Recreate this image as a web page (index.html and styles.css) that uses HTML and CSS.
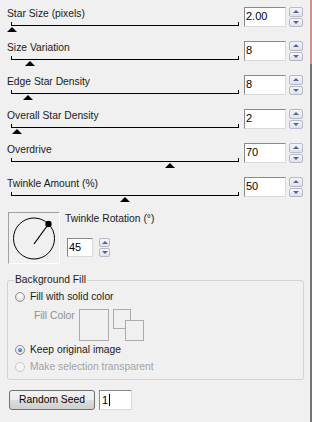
FILE: index.html
```html
<html>

<head>
  <title>Star Effect</title>
  <link rel="stylesheet" href="styles.css">
</head>

<body>

  <div class="row">
    <div class="slider-col">
      <label>Star Size (pixels)</label>
      <div class="track"><span class="thumb" style="--v: 0"></span></div>
    </div>
    <div class="value">2.00</div>
    <div class="spin"><span class="up"></span><span class="down"></span></div>
  </div>

  <div class="row">
    <div class="slider-col">
      <label>Size Variation</label>
      <div class="track"><span class="thumb" style="--v: 8"></span></div>
    </div>
    <div class="value">8</div>
    <div class="spin"><span class="up"></span><span class="down"></span></div>
  </div>

  <div class="row">
    <div class="slider-col">
      <label>Edge Star Density</label>
      <div class="track"><span class="thumb" style="--v: 7"></span></div>
    </div>
    <div class="value">8</div>
    <div class="spin"><span class="up"></span><span class="down"></span></div>
  </div>

  <div class="row">
    <div class="slider-col">
      <label>Overall Star Density</label>
      <div class="track"><span class="thumb" style="--v: 2"></span></div>
    </div>
    <div class="value">2</div>
    <div class="spin"><span class="up"></span><span class="down"></span></div>
  </div>

  <div class="row">
    <div class="slider-col">
      <label>Overdrive</label>
      <div class="track"><span class="thumb" style="--v: 70"></span></div>
    </div>
    <div class="value">70</div>
    <div class="spin"><span class="up"></span><span class="down"></span></div>
  </div>

  <div class="row">
    <div class="slider-col">
      <label>Twinkle Amount (%)</label>
      <div class="track"><span class="thumb" style="--v: 50"></span></div>
    </div>
    <div class="value">50</div>
    <div class="spin"><span class="up"></span><span class="down"></span></div>
  </div>

  <div class="dial-row">
    <div class="dial">
      <svg width="50" height="50" viewBox="0 0 50 50">
        <circle cx="25" cy="25.5" r="20.5" fill="none" stroke="#000" stroke-width="1"/>
        <line x1="25" y1="31" x2="39.5" y2="11" stroke="#000" stroke-width="1.2"/>
        <circle cx="39.5" cy="11" r="3.2" fill="#000"/>
      </svg>
    </div>
    <div class="dial-side">
      <label>Twinkle Rotation (°)</label>
      <div class="spinner">
        <div class="value small">45</div>
        <div class="spin small"><span class="up"></span><span class="down"></span></div>
      </div>
    </div>
  </div>

  <fieldset class="group">
    <legend>Background Fill</legend>
    <div class="opt"><span class="radio"></span>Fill with solid color</div>
    <div class="fill-row">
      <span class="fill-label">Fill Color</span>
      <span class="swatch"></span>
      <span class="pair"><span></span><span></span></span>
    </div>
    <div class="opt"><span class="radio on"></span>Keep original image</div>
    <div class="opt off"><span class="radio"></span>Make selection transparent</div>
  </fieldset>

  <div class="seed-row">
    <div class="button">Random Seed</div>
    <div class="value seed">1<span class="caret"></span></div>
  </div>

</body>

</html>
```

FILE: styles.css
```css
* {
  margin: 0;
  padding: 0;
  box-sizing: border-box;
}

html {
  background:
    linear-gradient(#d98c8a, #d98c8a) right top / 2px 64px no-repeat,
    linear-gradient(#767676, #767676) right top / 2px 100% no-repeat,
    #f0f0f0;
}

body {
  width: 312px;
  height: 422px;
  padding-top: 7px;
  overflow: hidden;
  font-family: "Liberation Sans", Arial, sans-serif;
  font-size: 10.3px;
  color: #1a1a1a;
}

label {
  display: block;
  line-height: 12px;
  margin-top: 1px;
}

/* slider rows */

.row {
  display: flex;
  height: 34px;
  padding-left: 7px;
}

.slider-col {
  width: 237px;
}

.track {
  position: relative;
  width: 228px;
  height: 4px;
  margin: 2px 0 0 4px;
  border: 1px solid #000;
  border-top: 0;
}

.thumb {
  position: absolute;
  top: 5px;
  left: calc(var(--v) * 1% - 5px);
  width: 0;
  height: 0;
  border-left: 5px solid transparent;
  border-right: 5px solid transparent;
  border-bottom: 5px solid #000;
}

.value {
  width: 42px;
  height: 20px;
  padding: 1px 0 0 1px;
  background: #fff;
  border: 1px solid;
  border-color: #8a8a8a #dadada #dadada #8a8a8a;
  font-size: 11px;
  line-height: 14px;
  color: #000;
}

.spin {
  display: flex;
  flex-direction: column;
  gap: 1px;
  width: 14px;
  height: 20px;
  margin-left: 3px;
}

.spin span {
  flex: 1;
  display: flex;
  align-items: center;
  justify-content: center;
  background: linear-gradient(#f6f7f9, #dfe2ea);
  border: 1px solid #b6bac8;
  border-radius: 2px;
}

.spin .up::after,
.spin .down::after {
  content: "";
  width: 0;
  height: 0;
  border-left: 3px solid transparent;
  border-right: 3px solid transparent;
}

.spin .up::after {
  border-bottom: 3px solid #56639a;
}

.spin .down::after {
  border-top: 3px solid #56639a;
}

/* rotation dial */

.dial-row {
  display: flex;
  padding-left: 8px;
  margin-top: 1px;
}

.dial {
  width: 52px;
  height: 52px;
  border: 1px solid;
  border-color: #a0a0a0 #fff #fff #a0a0a0;
}

.dial svg {
  display: block;
}

.dial-side {
  margin-left: 5px;
}

.spinner {
  display: flex;
  margin: 13px 0 0 2px;
}

.value.small {
  width: 26px;
  height: 19px;
}

.spin.small {
  width: 11px;
  height: 19px;
  margin-left: 6px;
}

/* background fill group */

.group {
  margin: 10px 8px 0 7px;
  padding: 0 8px 5px 8px;
  border: 1px solid #d3d3d3;
  border-radius: 3px;
}

.group legend {
  margin-left: -2px;
  padding: 0 1px;
  line-height: 12px;
}

.opt {
  display: flex;
  align-items: center;
  height: 14px;
  line-height: 14px;
}

.opt:first-of-type {
  margin-top: 4px;
}

.opt.off {
  margin-top: 3px;
  color: #a3a3a3;
}

.radio {
  display: flex;
  align-items: center;
  justify-content: center;
  width: 10px;
  height: 10px;
  margin: 0 5px 0 -1px;
  border: 1px solid #8e8f8f;
  border-radius: 50%;
  background: radial-gradient(circle at 50% 35%, #fff, #d4d4d4);
}

.radio.on::after {
  content: "";
  width: 4px;
  height: 4px;
  border-radius: 50%;
  background: radial-gradient(circle at 40% 35%, #6fb2ee, #1c4f9a);
}

.opt.off .radio {
  border-color: #c9c9c9;
  background: #f4f4f4;
}

.fill-row {
  display: flex;
  align-items: flex-start;
  height: 34px;
  margin-top: 5px;
  padding-left: 18px;
}

.fill-label {
  line-height: 14px;
  color: #8f8f8f;
}

.swatch {
  width: 30px;
  height: 32px;
  margin-left: 4px;
  border: 1px solid #ababab;
}

.pair {
  position: relative;
  width: 31px;
  height: 32px;
  margin-left: 4px;
}

.pair span {
  position: absolute;
  border: 1px solid #ababab;
  background: #f0f0f0;
}

.pair span:first-child {
  left: 0;
  top: 0;
  width: 18px;
  height: 20px;
}

.pair span:last-child {
  left: 12px;
  top: 11px;
  width: 19px;
  height: 21px;
}

/* random seed */

.seed-row {
  display: flex;
  margin-top: 10px;
  padding-left: 9px;
}

.button {
  width: 86px;
  height: 20px;
  border: 1px solid #707070;
  border-radius: 3px;
  background: linear-gradient(#f2f2f2 0%, #ebebeb 50%, #dddddd 50%, #cfcfcf 100%);
  text-align: center;
  line-height: 18px;
  color: #000;
}

.value.seed {
  display: flex;
  align-items: center;
  width: 33px;
  margin-left: 4px;
  padding: 0 0 0 2px;
}

.caret {
  width: 1px;
  height: 12px;
  margin-left: 1px;
  background: #000;
}
```
